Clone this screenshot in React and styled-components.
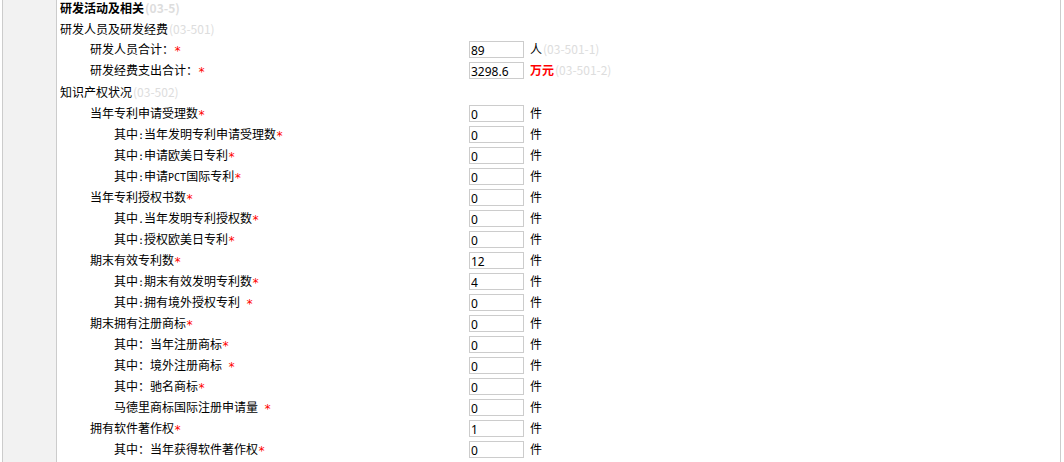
import React from "react";
import styled, { createGlobalStyle } from "styled-components";

const GlobalStyle = createGlobalStyle`
  * { box-sizing: border-box; }
  body {
    margin: 0;
    background: #fff;
    color: #000;
    font: 12px/21px "Noto Sans CJK SC", sans-serif;
  }
`;

const Page = styled.div`
  display: flex;
  min-height: 100vh;
  margin: 0 3px 0 2px;
  border: solid #ccc;
  border-width: 0 1px;
`;

const Sidebar = styled.aside`
  flex: 0 0 54px;
  background: #f2f2f2;
  border-right: 1px solid #ccc;
`;

const Form = styled.form`
  flex: 1;
  min-width: 0;
`;

const Title = styled.h1`
  margin: 0;
  padding: 0 0 1px 3px;
  font-size: 12px;
  line-height: 16px;
  font-weight: 700;
`;

const GroupTitle = styled.h2`
  margin: 0;
  padding-left: 3px;
  height: ${(p) => (p.$tall ? 22 : 21)}px;
  font-size: 12px;
  line-height: 23px;
  font-weight: 400;
`;

const Row = styled.div`
  display: grid;
  grid-template-columns: 412fr 591fr;
  height: 21px;
`;

const Label = styled.label`
  padding-left: ${(p) => (p.$level === 2 ? 57 : 33)}px;
  white-space: pre;
`;

const Half = styled.span`
  font-family: "DejaVu Sans Mono", monospace;
  font-size: 10px;
  line-height: 1;
`;

const Required = styled(Half)`
  color: #f00;
  font-size: 12px;
  vertical-align: -1px;
`;

const Field = styled.div`
  display: flex;
  align-items: center;
  gap: 6px;
`;

const Input = styled.input`
  width: 55px;
  height: 17px;
  padding: 2px 1px 0;
  border: 1px solid #ccc;
  border-radius: 0;
  background: #fff;
  color: #000;
  font: 12px/14px "Noto Sans", sans-serif;
  outline: none;
`;

const Unit = styled.span`
  padding-bottom: 2px;
  white-space: nowrap;
`;

const Alert = styled.strong`
  color: #f00;
`;

const Code = styled.span`
  color: #ddd;
  padding-left: 1px;
`;

const staff = [
  { label: "研发人员合计：", value: "89", unit: "人", code: "(03-501-1)" },
  { label: "研发经费支出合计：", value: "3298.6", unit: "万元", alert: true, code: "(03-501-2)" },
];

const property = [
  { label: "当年专利申请受理数", value: "0" },
  { label: "其中:当年发明专利申请受理数", value: "0", level: 2 },
  { label: "其中:申请欧美日专利", value: "0", level: 2 },
  { label: "其中:申请PCT国际专利", value: "0", level: 2 },
  { label: "当年专利授权书数", value: "0" },
  { label: "其中.当年发明专利授权数", value: "0", level: 2 },
  { label: "其中:授权欧美日专利", value: "0", level: 2 },
  { label: "期末有效专利数", value: "12" },
  { label: "其中:期末有效发明专利数", value: "4", level: 2 },
  { label: "其中:拥有境外授权专利 ", value: "0", level: 2 },
  { label: "期末拥有注册商标", value: "0" },
  { label: "其中：当年注册商标", value: "0", level: 2 },
  { label: "其中：境外注册商标 ", value: "0", level: 2 },
  { label: "其中：驰名商标", value: "0", level: 2 },
  { label: "马德里商标国际注册申请量 ", value: "0", level: 2 },
  { label: "拥有软件著作权", value: "1" },
  { label: "其中：当年获得软件著作权", value: "0", level: 2 },
];

// Half-width characters take half the advance of a Chinese character.
function MixedText({ text }) {
  return text
    .split(/([\x20-\x7e]+)/)
    .map((part, i) => (i % 2 ? <Half key={i}>{part}</Half> : part));
}

function FormRow({ id, label, value, level = 1, unit = "件", alert, code }) {
  return (
    <Row>
      <Label htmlFor={id} $level={level}>
        <MixedText text={label} />
        <Required>*</Required>
      </Label>
      <Field>
        <Input id={id} type="text" defaultValue={value} />
        <Unit>
          {alert ? <Alert>{unit}</Alert> : unit}
          {code && <Code>{code}</Code>}
        </Unit>
      </Field>
    </Row>
  );
}

export default function App() {
  return (
    <>
      <GlobalStyle />
      <Page>
        <Sidebar />
        <Form>
          <Title>
            研发活动及相关<Code>(03-5)</Code>
          </Title>
          <GroupTitle>
            研发人员及研发经费<Code>(03-501)</Code>
          </GroupTitle>
          {staff.map((row, i) => (
            <FormRow key={i} id={`staff-${i}`} {...row} />
          ))}
          <GroupTitle $tall>
            知识产权状况<Code>(03-502)</Code>
          </GroupTitle>
          {property.map((row, i) => (
            <FormRow key={i} id={`property-${i}`} {...row} />
          ))}
        </Form>
      </Page>
    </>
  );
}
